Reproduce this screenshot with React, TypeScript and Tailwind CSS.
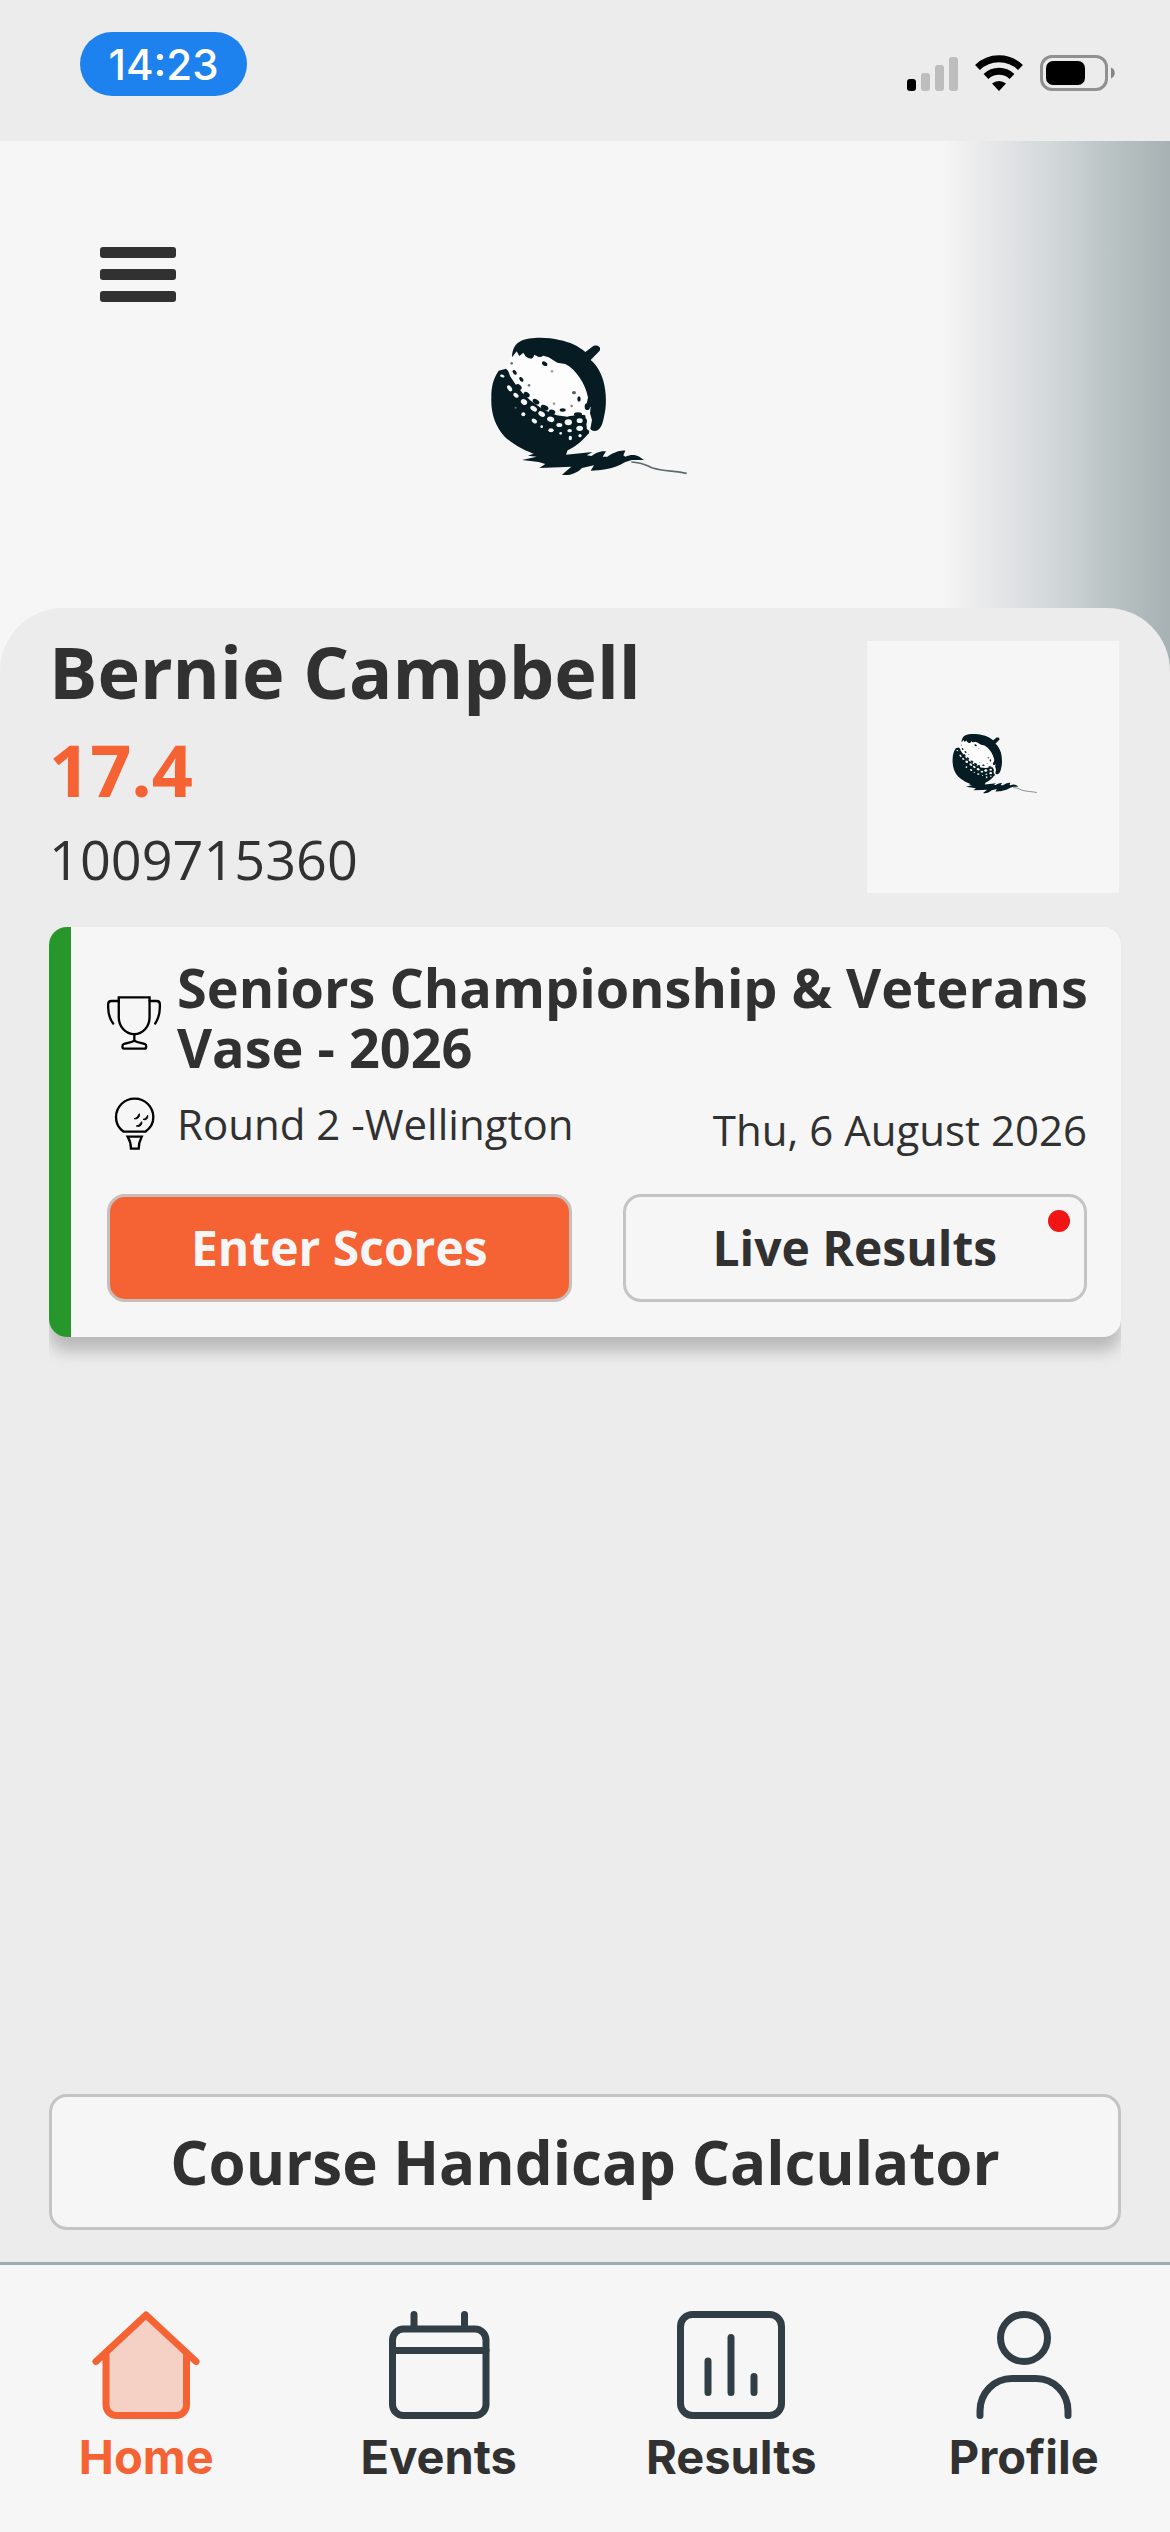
import type { ReactNode } from "react";

const TABS = [
  { name: "Home", href: "#home", icon: <HomeIcon />, active: true },
  { name: "Events", href: "#events", icon: <EventsIcon />, active: false },
  { name: "Results", href: "#results", icon: <ResultsIcon />, active: false },
  { name: "Profile", href: "#profile", icon: <ProfileIcon />, active: false }
];

export default function App() {
  return (
    <div className="flex min-h-screen flex-col bg-[#ececec] font-['Open_Sans',sans-serif] text-[#313131]">
      <StatusBar />
      <Header />
      <main className="relative -mt-[84px] flex grow flex-col rounded-t-[63px] bg-[#ececec] px-[49px] pb-8">
        <Player name="Bernie Campbell" handicap="17.4" membership="1009715360" />
        <EventCard />
        <button className="mt-auto h-[136px] w-full rounded-[18px] border-[3px] border-[#c4c4c4] bg-[#f6f6f6] text-[60px] font-bold">
          Course Handicap Calculator
        </button>
      </main>
      <TabBar />
    </div>
  );
}

function StatusBar() {
  return (
    <div className="flex h-[141px] items-start justify-between pr-[55px] pl-20 font-['Inter',sans-serif]">
      <div className="mt-8 flex h-16 w-[167px] items-center justify-center rounded-full bg-[#1d82ee] text-[42px] font-medium text-white">
        14:23
      </div>
      <div className="mt-[55px] flex items-center gap-[17px]">
        <svg viewBox="0 0 51 36" className="h-9 w-[51px]">
          <rect x="0" y="24" width="9" height="12" rx="3" fill="#000" />
          <rect x="14" y="18" width="9" height="18" rx="3" fill="#bdbdbd" />
          <rect x="28" y="10" width="9" height="26" rx="3" fill="#bdbdbd" />
          <rect x="42" y="2" width="9" height="34" rx="3" fill="#bdbdbd" />
        </svg>
        <svg viewBox="0 0 48 36" className="h-9 w-12">
          <path d="M2.500 12.500A31 31 0 0 1 45.500 12.500" fill="none" stroke="#000" strokeWidth="7" />
          <path d="M11 21.500A19 19 0 0 1 37 21.500" fill="none" stroke="#000" strokeWidth="7" />
          <path d="M17 28.500A11 11 0 0 1 31 28.500L24 36Z" />
        </svg>
        <svg viewBox="0 0 75 36" className="h-9 w-[75px]">
          <rect x="1.500" y="1.500" width="65" height="33" rx="10.500" fill="none" stroke="#909090" strokeWidth="3" />
          <rect x="6" y="6" width="39" height="24" rx="7" />
          <path d="M71 12.500C76 14.500 76 21.500 71 23.500Z" fill="#858585" />
        </svg>
      </div>
    </div>
  );
}

function Header() {
  return (
    <header className="grid h-[551px] grid-cols-[1fr_auto_1fr] items-start bg-[#f6f6f6] bg-linear-[90deg,#f6f6f6_80.5%,#ededee_83%,#e1e3e5_86%,#d2d7d8_90%,#b9c3c4_95%,#a7b1b3_100%]">
      <button aria-label="Open menu" className="mt-[106px] ml-[100px] flex h-[55px] w-19 flex-col justify-between">
        <span className="h-[11px] w-full rounded-[3px] bg-[#313131]" />
        <span className="h-[11px] w-full rounded-[3px] bg-[#313131]" />
        <span className="h-[11px] w-full rounded-[3px] bg-[#313131]" />
      </button>
      <AcornLogo className="mt-[195px] h-[140px] w-[204px]" />
    </header>
  );
}

function Player({ name, handicap, membership }: { name: string; handicap: string; membership: string }) {
  return (
    <section className="flex items-start justify-between">
      <div className="pt-3.5">
        <h1 className="text-[72px] leading-[98px] font-bold">{name}</h1>
        <p className="text-[72px] leading-[98px] font-bold text-[#f56334]">{handicap}</p>
        <p className="text-[54px] leading-[82px]">{membership}</p>
      </div>
      <div className="mt-[33px] mr-0.5 flex size-[252px] items-center justify-center bg-[#f6f6f6] pb-2">
        <AcornLogo className="h-[61px] w-[88px]" />
      </div>
    </section>
  );
}

function EventCard() {
  return (
    <div className="-mt-px overflow-hidden pt-7 pb-10">
      <article className="rounded-[18px] bg-[#f6f6f6] shadow-[0_14px_16px_rgba(0,0,0,0.22)]">
        <div className="rounded-[18px] bg-linear-[90deg,#27972c_22px,transparent_22px] pt-[30px] pr-6 pb-[35px] pl-[58px]">
          <div className="flex items-center gap-4">
            <TrophyIcon />
            <h2 className="text-[54px] leading-[60px] font-bold">Seniors Championship &amp; Veterans Vase - 2026</h2>
          </div>
          <div className="mt-5 flex items-start justify-between pr-2.5">
            <div className="flex items-center gap-4">
              <GolfTeeIcon />
              <p className="text-[42px] leading-[54px]">Round 2 -Wellington</p>
            </div>
            <time dateTime="2026-08-06" className="pt-1.5 text-[42px] leading-[54px]">
              Thu, 6 August 2026
            </time>
          </div>
          <div className="mt-[37px] grid grid-cols-2 gap-[51px] pr-2.5">
            <button className="h-[108px] rounded-[18px] border-[3px] border-[#c8beba] bg-[#f56334] text-[48px] font-bold text-[#f6f6f6]">
              Enter Scores
            </button>
            <button className="relative h-[108px] rounded-[18px] border-[3px] border-[#c4c4c4] text-[48px] font-bold">
              Live Results
              <span className="absolute top-[13px] right-3.5 size-[22px] rounded-full bg-[#f01616]" />
            </button>
          </div>
        </div>
      </article>
    </div>
  );
}

function TabBar() {
  return (
    <nav className="grid grid-cols-4 border-t-[3px] border-[#a0adae] bg-[#f6f6f6] pt-[46px] pb-[45px] font-['Inter',sans-serif]">
      {TABS.map((tab) => (
        <a
          key={tab.name}
          href={tab.href}
          className={`flex flex-col items-center gap-2 text-[47px] leading-[60px] font-bold ${tab.active ? "text-[#f56334]" : "text-[#313131]"}`}
        >
          {tab.icon}
          {tab.name}
        </a>
      ))}
    </nav>
  );
}

function TabIcon({ color, children }: { color: string; children: ReactNode }) {
  return (
    <svg
      viewBox="0 0 108 108"
      className="size-[108px]"
      fill="none"
      stroke={color}
      strokeWidth="7"
      strokeLinecap="round"
      strokeLinejoin="round"
    >
      {children}
    </svg>
  );
}

function HomeIcon() {
  return (
    <TabIcon color="#f56334">
      <path d="M14 41V94A10.500 10.500 0 0 0 24.500 104.500H84A10.500 10.500 0 0 0 94.500 94V41L54 4Z" fill="#f5d0c5" stroke="none" />
      <path d="M4 50.500L54 4L104 50.500" />
      <path d="M14 42V94A10.500 10.500 0 0 0 24.500 104.500H84A10.500 10.500 0 0 0 94.500 94V42" />
    </TabIcon>
  );
}

function EventsIcon() {
  return (
    <TabIcon color="#323e46">
      <rect x="7.500" y="18" width="93.500" height="86.500" rx="11" />
      <path d="M8 39.500H101M29 3.500V17M79.500 3.500V17" />
    </TabIcon>
  );
}

function ResultsIcon() {
  return (
    <TabIcon color="#323e46">
      <rect x="3.500" y="3.500" width="101" height="101" rx="12" />
      <path d="M31 50V81.500M54 26.500V81.500M77 65.500V81.500" />
    </TabIcon>
  );
}

function ProfileIcon() {
  return (
    <TabIcon color="#323e46">
      <circle cx="54" cy="27" r="23.500" />
      <path d="M10 104.500V100C10 82 24 67.500 42 67.500H66C84 67.500 98 82 98 100V104.500" />
    </TabIcon>
  );
}

function TrophyIcon() {
  return (
    <svg viewBox="36 32 162 163" className="mt-3 size-[54px] shrink-0" fill="none" stroke="#000" strokeWidth="7">
      <path d="M71 36H164V96C164 125 143 147 118 147C92 147 71 125 71 96Z" />
      <path d="M71 47H49C43 47 39 51 39 57V66C39 86 45 103 54 115" strokeLinecap="round" />
      <path d="M164 47H185C191 47 195 51 195 57V66C195 86 189 103 181 115" strokeLinecap="round" />
      <path d="M118 147V168" />
      <path d="M118 167C107 173 94 174 86 177C81 179 80 191 87 191H148C156 191 155 179 150 177C141 174 128 173 118 167Z" strokeLinejoin="round" />
    </svg>
  );
}

function GolfTeeIcon() {
  return (
    <svg viewBox="36 336 162 162" className="size-[54px] shrink-0" fill="none" stroke="#000" strokeWidth="7">
      <path d="M86 440C71 430 63 414 63 397C63 365 88 341 119 341C150 341 175 365 175 397C175 414 166 430 151 440Z" />
      <path d="M98 455H140C135 465 131 476 131 491H108C108 476 104 465 98 455Z" />
      <path d="M133 386C135 396 128 404 117 401C127 400 128 393 133 386ZM158 391C160 401 153 407 144 403C153 402 154 397 158 391ZM140 410C142 420 135 427 124 423C134 421 135 416 140 410Z" fill="#000" strokeWidth="3" />
    </svg>
  );
}

function AcornLogo({ className }: { className: string }) {
  return (
    <svg viewBox="39 78 612 420" className={className} fill="#061c22">
      {/* ball */}
      <path d="M86 182L108 176L124 192C160 240 240 305 300 318L346 312L358 366C340 392 315 412 290 422L288 432L200 434C165 424 125 400 104 380C76 350 62 310 64 262C64 230 70 205 86 182Z" />
      <path
        d="M110 168L122 142L140 128L160 124L200 132L240 146L285 160C320 182 348 225 354 270L362 300L364 352L352 368L346 316L318 312L292 320L260 316L236 306L210 292L184 274L158 250L136 222L120 198Z"
        fill="#fdfdfd"
      />
      {/* acorn cup and stalk */}
      <path d="M126 142C126 118 136 100 154 92C175 82 230 80 268 90C300 96 325 108 346 126L370 108C384 103 394 112 389 122L362 150C378 162 392 185 400 212C410 250 410 290 402 320C398 340 394 352 384 360C375 365 365 363 361 356L366 330L360 310L362 292L350 282L354 262C346 222 320 180 286 162L262 158L236 142L210 134L206 140L192 134L184 146L168 140L160 128L148 138L140 124Z" />
      <g>
        <circle cx="181" cy="134" r="11" />
        <circle cx="210" cy="130" r="11" />
        <ellipse cx="224" cy="161" rx="9" ry="6" transform="rotate(30 224 161)" />
        <circle cx="246" cy="184" r="4" fillOpacity=".4" />
        <circle cx="125" cy="160" r="4" fillOpacity=".6" />
        <ellipse cx="134" cy="187" rx="8" ry="5" transform="rotate(50 134 187)" />
        <ellipse cx="154" cy="208" rx="8" ry="5" transform="rotate(50 154 208)" />
        <circle cx="177" cy="226" r="4" fillOpacity=".6" />
        <ellipse cx="146" cy="231" rx="10" ry="7" transform="rotate(40 146 231)" />
        <ellipse cx="170" cy="254" rx="10" ry="7" transform="rotate(35 170 254)" />
        <ellipse cx="198" cy="275" rx="11" ry="7" transform="rotate(30 198 275)" />
        <ellipse cx="224" cy="293" rx="12" ry="7" transform="rotate(25 224 293)" />
        <ellipse cx="246" cy="306" rx="10" ry="7" transform="rotate(15 246 306)" />
        <ellipse cx="278" cy="300" rx="9" ry="5" />
        <ellipse cx="324" cy="313" rx="12" ry="6" />
        <circle cx="252" cy="281" r="4" fillOpacity=".4" />
        <circle cx="305" cy="288" r="4" fillOpacity=".5" />
        <ellipse cx="312" cy="248" rx="6" ry="5" fillOpacity=".7" />
        <ellipse cx="327" cy="267" rx="5" ry="8" />
        <ellipse cx="352" cy="290" rx="8" ry="10" />
        <ellipse cx="344" cy="334" rx="7" ry="9" />
        <ellipse cx="349" cy="366" rx="8" ry="8" />
      </g>
      {/* dimples */}
      <g fill="#f6f6f6">
        <ellipse cx="97" cy="198" rx="7" ry="4" transform="rotate(20 97 198)" />
        <ellipse cx="119" cy="235" rx="6" ry="10" transform="rotate(-35 119 235)" />
        <ellipse cx="138" cy="256" rx="9" ry="6" transform="rotate(35 138 256)" />
        <ellipse cx="162" cy="276" rx="10" ry="8" transform="rotate(35 162 276)" />
        <ellipse cx="191" cy="296" rx="11" ry="7" transform="rotate(35 191 296)" />
        <ellipse cx="215" cy="312" rx="11" ry="7" transform="rotate(35 215 312)" />
        <ellipse cx="242" cy="328" rx="11" ry="8" transform="rotate(20 242 328)" />
        <ellipse cx="295" cy="337" rx="11" ry="9" />
        <ellipse cx="268" cy="345" rx="9" ry="6" />
        <ellipse cx="329" cy="332" rx="9" ry="7" />
        <ellipse cx="329" cy="355" rx="10" ry="8" />
        <ellipse cx="299" cy="362" rx="7" ry="5" />
        <circle cx="137" cy="293" r="3" fillOpacity=".4" />
        <circle cx="160" cy="313" r="6" />
        <ellipse cx="193" cy="333" rx="9" ry="6" transform="rotate(35 193 333)" />
        <circle cx="215" cy="350" r="4" />
        <ellipse cx="243" cy="361" rx="8" ry="6" />
        <circle cx="272" cy="370" r="4" />
        <ellipse cx="301" cy="384" rx="5" ry="7" />
        <circle cx="330" cy="377" r="5" />
      </g>
      {/* oak leaf and its stem */}
      <path d="M198 428L174 437L200 440L156 450L206 456L226 462L208 474L268 472L304 470L276 494C296 498 318 492 336 474L372 466L362 482C390 482 430 478 466 456L486 450L522 450L508 440C494 432 480 434 466 440L460 436L466 422C448 420 428 430 412 440L398 440L408 424C388 422 376 430 364 438L350 436L368 426L288 434L294 416L200 416Z" />
      <path d="M484 456C520 458 524 464 548 474C580 484 615 482 650 490" fill="none" stroke="#5d6a6d" strokeWidth="5" />
    </svg>
  );
}
